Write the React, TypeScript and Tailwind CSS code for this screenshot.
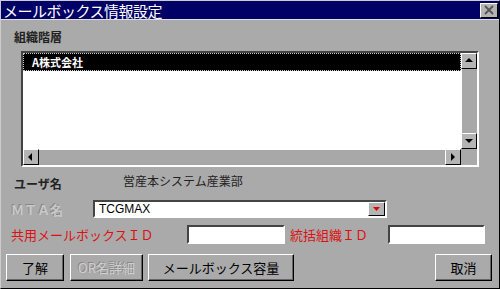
import React from 'react'

const jp = { fontFamily: '"Noto Sans CJK JP", "DejaVu Sans", sans-serif' }

function Btn({ label, disabled, className }: { label: string; disabled?: boolean; className: string }) {
  return (
    <button
      className={`h-[27px] border border-t-white border-l-white border-b-black border-r-black shadow-[inset_-1px_-1px_0_#666] text-[13px] ${
        disabled ? 'text-[#cfcfcf] [text-shadow:-1px_-1px_0_#888]' : 'text-black'
      } ${className}`}
    >
      {label}
    </button>
  )
}

function Arrow({ dir }: { dir: 'up' | 'down' | 'left' | 'right' }) {
  const pts = {
    up: '2,7 6,3 10,7',
    down: '2,4 6,8 10,4',
    left: '7,2 3,6 7,10',
    right: '4,2 8,6 4,10',
  }[dir]
  return (
    <div className="w-[16px] h-[16px] bg-[#b4b4b4] border border-t-white border-l-white border-b-black border-r-black flex items-center justify-center">
      <svg width="12" height="12" viewBox="0 0 12 12">
        <polygon points={pts} fill="#000" />
      </svg>
    </div>
  )
}

export default function App() {
  return (
    <div className="w-[500px] h-[289px] bg-[#aaaaaa] flex flex-col border border-b-black border-r-black border-t-[#ccc] border-l-[#ccc] overflow-hidden" style={jp}>
      {/* Title bar */}
      <div className="h-[19px] bg-[#000066] flex items-center justify-between pl-[2px] pr-[1px] border-b border-b-[#dddddd]">
        <span className="text-white text-[15px] leading-none tracking-[-0.5px]">メールボックス情報設定</span>
        <div className="w-[18px] h-[15px] bg-[#b4b4b4] border border-t-white border-l-white border-b-black border-r-black flex items-center justify-center">
          <svg width="12" height="10" viewBox="0 0 12 10">
            <path d="M2 1 L10 9 M10 1 L2 9" stroke="#555" strokeWidth="1.8" />
          </svg>
        </div>
      </div>

      {/* Body */}
      <div className="flex-1 flex flex-col px-[9px]">
        <div className="mt-[11px] ml-[4px] text-[12px] font-bold leading-none text-[#222]">組織階層</div>

        {/* List box */}
        <div className="mt-[8px] ml-[11px] w-[458px] h-[116px] border-2 border-t-[#444] border-l-[#444] border-b-white border-r-white flex flex-col bg-white">
          <div className="flex-1 flex min-h-0">
            <div className="flex-1 bg-white">
              <div className="h-[18px] bg-black border border-dotted border-[#ccc] flex items-center pl-[8px]">
                <span className="text-white text-[11px] font-bold leading-none">A株式会社</span>
              </div>
            </div>
            <div className="w-[16px] flex flex-col bg-[#aaaaaa]">
              <Arrow dir="up" />
              <div className="flex-1 bg-[#a8a8a8] border-l border-l-white" />
              <Arrow dir="down" />
            </div>
          </div>
          <div className="h-[16px] flex bg-[#aaaaaa]">
            <Arrow dir="left" />
            <div className="flex-1 bg-[#a8a8a8] border-t border-t-white" />
            <Arrow dir="right" />
            <div className="w-[16px] bg-[#aaaaaa]" />
          </div>
        </div>

        {/* ユーザ名 */}
        <div className="mt-[8px] h-[18px] flex items-start">
          <span className="ml-[4px] mt-[3px] w-[109px] text-[12px] font-semibold leading-none text-[#222]">ユーザ名</span>
          <span className="text-[12px] leading-none text-[#222]">営産本システム産業部</span>
        </div>

        {/* MTA名 */}
        <div className="mt-[7px] flex items-center">
          <span className="ml-[1px] w-[82px] text-[13px] font-bold leading-none text-[#c8c8c8] [text-shadow:-1px_-1px_0_#888]">ＭＴＡ名</span>
          <div className="w-[294px] h-[18px] bg-white border-2 border-t-[#444] border-l-[#444] border-b-white border-r-white flex items-center">
            <span className="flex-1 pl-[4px] text-[12px] leading-none text-black" style={{ fontFamily: '"Liberation Sans", sans-serif' }}>TCGMAX</span>
            <div className="w-[17px] h-[14px] bg-[#b4b4b4] border border-t-white border-l-white border-b-black border-r-black flex items-center justify-center">
              <svg width="9" height="6" viewBox="0 0 9 6">
                <polygon points="1,1 8,1 4.5,5" fill="#e00000" />
              </svg>
            </div>
          </div>
        </div>

        {/* ID row */}
        <div className="mt-[7px] flex items-center">
          <span className="ml-[1px] w-[176px] text-[13px] leading-none text-[#dd1111]">共用メールボックスＩＤ</span>
          <div className="w-[98px] h-[19px] bg-white border-2 border-t-[#444] border-l-[#444] border-b-white border-r-white" />
          <span className="ml-[5px] w-[98px] text-[13px] leading-none text-[#dd1111]">統括組織ＩＤ</span>
          <div className="w-[97px] h-[19px] bg-white border-2 border-t-[#444] border-l-[#444] border-b-white border-r-white" />
        </div>

        {/* Buttons */}
        <div className="mt-[10px] flex items-center -ml-[4px]">
          <Btn label="了解" className="w-[58px]" />
          <Btn label="OR名詳細" disabled className="ml-[6px] w-[73px]" />
          <Btn label="メールボックス容量" className="ml-[5px] w-[146px]" />
          <div className="flex-1" />
          <Btn label="取消" className="w-[57px] mr-[-2px]" />
        </div>
      </div>
    </div>
  )
}
